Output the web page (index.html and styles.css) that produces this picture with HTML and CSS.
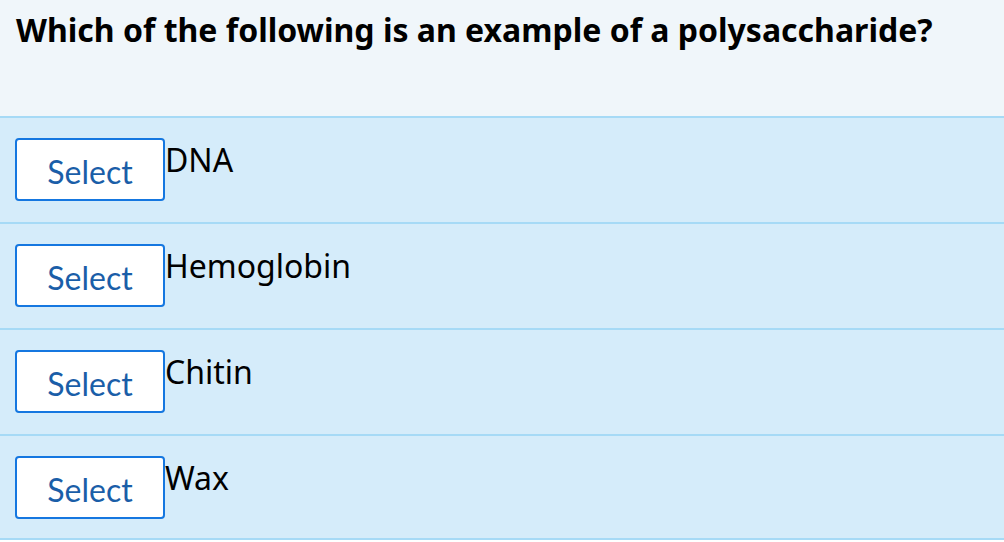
FILE: index.html
```html
<!DOCTYPE html>
<html>
<head>
<meta charset="utf-8">
<link rel="stylesheet" href="styles.css">
</head>
<body>
<div class="question">
  <h1 class="title">Which of the following is an example of a polysaccharide?</h1>
</div>
<div class="options">
  <div class="option"><button class="select">Select</button><span class="label">DNA</span></div>
  <div class="option"><button class="select">Select</button><span class="label">Hemoglobin</span></div>
  <div class="option"><button class="select">Select</button><span class="label">Chitin</span></div>
  <div class="option"><button class="select">Select</button><span class="label">Wax</span></div>
</div>
</body>
</html>
```
FILE: styles.css
```css
html, body {
  margin: 0;
  padding: 0;
  background: #ffffff;
}
.question {
  background: #f0f6fa;
  height: 116px;
  padding: 0 16px;
  box-sizing: border-box;
}
.title {
  margin: 0;
  padding-top: 8px;
  font-family: "Noto Sans", "Open Sans", sans-serif;
  font-weight: 700;
  font-size: 32px;
  line-height: 44px;
  color: #000;
}
.options {
  display: flex;
  flex-direction: column;
}
.option {
  display: flex;
  align-items: flex-start;
  background: #d5ecfa;
  border-top: 2px solid #a6daf6;
  height: 106px;
  box-sizing: border-box;
  padding: 20px 15px 0;
}
.option:last-child {
  border-bottom: 2px solid #a6daf6;
}
.select {
  width: 150px;
  height: 63px;
  box-sizing: border-box;
  background: #ffffff;
  border: 2px solid #1577e0;
  border-radius: 4px;
  font-family: Lato, sans-serif;
  font-size: 32px;
  color: #1a5ea8;
  padding: 4px 0 0;
  margin: 0;
}
.label {
  font-family: "Noto Sans", "Open Sans", sans-serif;
  font-size: 32px;
  line-height: 40px;
  color: #000;
  margin-left: 0;
  margin-top: 2px;
}
```
